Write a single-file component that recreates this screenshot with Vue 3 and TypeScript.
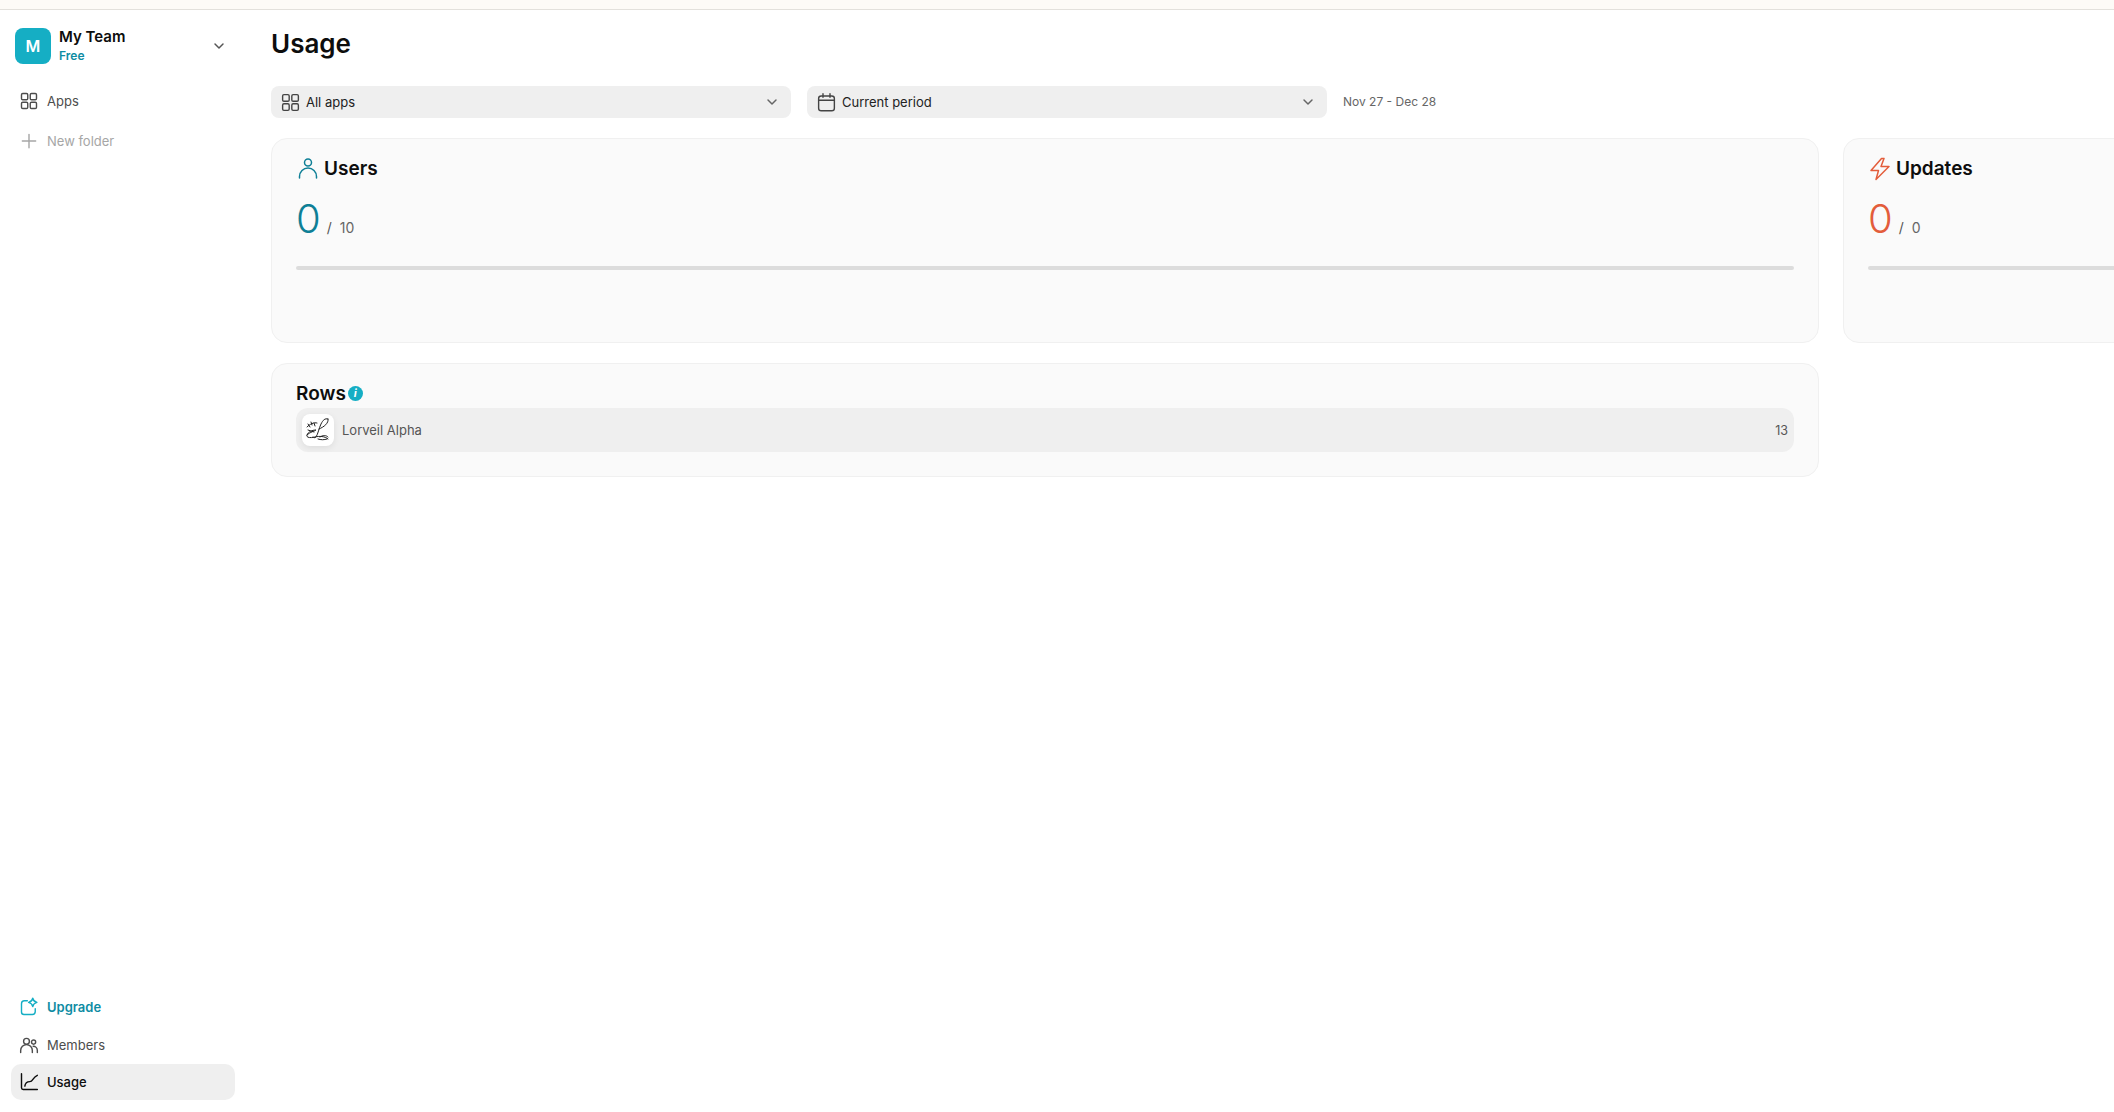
<script setup lang="ts">
interface NavItem {
  label: string
  icon: string
  tone?: string
}

const topNav: NavItem[] = [
  { label: 'Apps', icon: 'grid' },
  { label: 'New folder', icon: 'plus', tone: 'muted' }
]

const bottomNav: NavItem[] = [
  { label: 'Upgrade', icon: 'upgrade', tone: 'accent' },
  { label: 'Members', icon: 'members' },
  { label: 'Usage', icon: 'chart', tone: 'active' }
]

const metrics = [
  { label: 'Users', value: 0, limit: 10, tone: 'teal', icon: 'user' },
  { label: 'Updates', value: 0, limit: 0, tone: 'red', icon: 'bolt' }
]
</script>

<template>
  <div class="shell">
    <div class="banner"></div>
    <div class="layout">
      <!-- Sidebar -->
      <aside class="sidebar">
        <div>
          <div class="team">
            <div class="avatar">M</div>
            <div class="team-text">
              <div class="team-name">My Team</div>
              <div class="team-plan">Free</div>
            </div>
            <svg class="team-chevron" viewBox="0 0 24 24" fill="none" stroke="currentColor" stroke-width="2.2" stroke-linecap="round" stroke-linejoin="round">
              <path d="M6 9l6 6 6-6" />
            </svg>
          </div>
          <nav class="nav">
            <div v-for="item in topNav" :key="item.label" class="nav-item" :class="item.tone">
              <svg class="nav-icon" viewBox="0 0 24 24" fill="none" stroke="currentColor" stroke-width="1.7" stroke-linecap="round" stroke-linejoin="round">
                <template v-if="item.icon === 'grid'">
                  <rect x="3" y="3" width="7.5" height="7.5" rx="1.5" />
                  <rect x="13.5" y="3" width="7.5" height="7.5" rx="1.5" />
                  <rect x="3" y="13.5" width="7.5" height="7.5" rx="1.5" />
                  <rect x="13.5" y="13.5" width="7.5" height="7.5" rx="1.5" />
                </template>
                <path v-else d="M12 4v16M4 12h16" />
              </svg>
              <span>{{ item.label }}</span>
            </div>
          </nav>
        </div>
        <nav class="nav nav-bottom">
          <div v-for="item in bottomNav" :key="item.label" class="nav-item" :class="item.tone">
            <svg class="nav-icon" viewBox="0 0 24 24" fill="none" stroke="currentColor" stroke-width="1.7" stroke-linecap="round" stroke-linejoin="round">
              <template v-if="item.icon === 'upgrade'">
                <path d="M10 4.500H6.500A3.500 3.500 0 0 0 3 8v10a3 3 0 0 0 3 3h10a3.500 3.500 0 0 0 3.500-3.500V14" />
                <path d="M16.500 1.500c.6 3 1.700 4.200 5 5-3.300.8-4.400 2-5 5-.6-3-1.700-4.200-5-5 3.300-.8 4.400-2 5-5z" />
              </template>
              <template v-else-if="item.icon === 'members'">
                <circle cx="9" cy="7.500" r="3.500" />
                <circle cx="17.500" cy="8.500" r="2.500" />
                <path d="M2 21v-2.500a7 7 0 0 1 14 0V21" />
                <path d="M17 13.500a5 5 0 0 1 5 5V21" />
              </template>
              <template v-else>
                <path d="M3 2v17a2 2 0 0 0 2 2h17" />
                <path d="M7 17c.5-4 2.500-5.500 6-5.500 4 0 3-5 9-7.500" />
              </template>
            </svg>
            <span>{{ item.label }}</span>
          </div>
        </nav>
      </aside>

      <!-- Main content -->
      <main class="main">
        <h1 class="page-title">Usage</h1>

        <div class="filters">
          <div class="select">
            <svg class="select-icon" viewBox="0 0 24 24" fill="none" stroke="currentColor" stroke-width="1.600" stroke-linejoin="round">
              <rect x="3" y="3" width="7.500" height="7.500" rx="1.500" />
              <rect x="13.500" y="3" width="7.500" height="7.500" rx="1.500" />
              <rect x="3" y="13.500" width="7.500" height="7.500" rx="1.500" />
              <rect x="13.500" y="13.500" width="7.500" height="7.500" rx="1.500" />
            </svg>
            <span class="select-label">All apps</span>
            <svg class="select-chevron" viewBox="0 0 24 24" fill="none" stroke="currentColor" stroke-width="2.200" stroke-linecap="round" stroke-linejoin="round">
              <path d="M6 9l6 6 6-6" />
            </svg>
          </div>
          <div class="select">
            <svg class="select-icon" viewBox="0 0 24 24" fill="none" stroke="currentColor" stroke-width="1.600" stroke-linecap="round" stroke-linejoin="round">
              <rect x="3" y="4.500" width="18" height="17" rx="3" />
              <path d="M3 9.500h18M8 2v4M16 2v4" />
            </svg>
            <span class="select-label">Current period</span>
            <svg class="select-chevron" viewBox="0 0 24 24" fill="none" stroke="currentColor" stroke-width="2.200" stroke-linecap="round" stroke-linejoin="round">
              <path d="M6 9l6 6 6-6" />
            </svg>
          </div>
          <span class="date-range">Nov 27 - Dec 28</span>
        </div>

        <div class="metric-grid">
          <section v-for="metric in metrics" :key="metric.label" class="card metric-card">
            <div class="metric-head">
              <svg class="metric-icon" :class="metric.tone" viewBox="0 0 24 24" fill="none" stroke="currentColor" stroke-width="1.500" stroke-linecap="round" stroke-linejoin="round">
                <template v-if="metric.icon === 'user'">
                  <circle cx="12" cy="5.500" r="3.500" />
                  <path d="M3.500 21v-1.500a8.500 8.500 0 0 1 17 0V21" />
                </template>
                <path v-else d="M13.500 1.500L3 13.500h7.500L8 22.500l13-13h-8l3-8z" />
              </svg>
              <h2 class="card-title">{{ metric.label }}</h2>
            </div>
            <div class="metric-value">
              <span class="metric-number" :class="metric.tone">{{ metric.value }}</span>
              <span class="metric-slash">/</span>
              <span class="metric-limit">{{ metric.limit }}</span>
            </div>
            <div class="progress"></div>
          </section>

          <section class="card rows-card">
            <div class="rows-head">
              <h2 class="card-title">Rows</h2>
              <span class="info">i</span>
            </div>
            <div class="rows-item">
              <div class="app-icon">
                <svg viewBox="0 0 32 32" fill="none" stroke="#222" stroke-width="1" stroke-linecap="round" stroke-linejoin="round">
                  <path d="M26 5c-3-1-5 1-7 5s-3 10-5 13c-1 1-3 1-3 0" />
                  <path d="M26 5c1 4-4 8-9 10" />
                  <path d="M5 13c3-3 7-5 10-4M6 10l2 3M9 8l1 3M12 9l1 3" />
                  <path d="M5 21c3-3 8-4 9-5-4 0-8 2-9 5-1 3 4 3 8 2s10-1 13 2" />
                  <path d="M18 23c3-2 6-2 8 0M6 16l6 2M16 25c3 1 6 1 9 0" />
                </svg>
              </div>
              <span class="rows-name">Lorveil Alpha</span>
              <span class="rows-count">13</span>
            </div>
          </section>
        </div>
      </main>
    </div>
  </div>
</template>

<style>
html,
body {
  margin: 0;
  background: #ffffff;
  overflow: hidden;
}
</style>

<style scoped>
.shell {
  height: 1112px;
  width: 2114px;
  overflow: hidden;
  display: flex;
  flex-direction: column;
  font-family: Inter, 'Noto Sans', sans-serif;
  color: #0d0d0d;
}

.banner {
  height: 9px;
  flex-shrink: 0;
  background: #fdfbf7;
  border-bottom: 1px solid #e3e1dc;
}

.layout {
  flex: 1;
  display: flex;
  min-height: 0;
}

/* Sidebar */
.sidebar {
  width: 235px;
  box-sizing: border-box;
  flex-shrink: 0;
  padding: 18px 0 12px 11px;
  display: flex;
  flex-direction: column;
  justify-content: space-between;
}

.team {
  display: flex;
  align-items: center;
  padding-left: 4px;
  height: 36px;
}

.avatar {
  width: 36px;
  height: 36px;
  border-radius: 8px;
  background: #15aec4;
  color: #ffffff;
  font-size: 16px;
  font-weight: 600;
  display: flex;
  align-items: center;
  justify-content: center;
}

.team-text {
  margin-left: 8px;
  flex: 1;
}

.team-name {
  font-size: 15px;
  font-weight: 600;
  line-height: 20px;
  margin-top: -1px;
}

.team-plan {
  font-size: 12px;
  font-weight: 600;
  line-height: 16px;
  margin-top: 1px;
  color: #0e8ca3;
}

.team-chevron {
  width: 16px;
  height: 16px;
  color: #555555;
  margin-right: 8px;
}

.nav {
  display: flex;
  flex-direction: column;
  margin-top: 18px;
  gap: 2px;
}

.nav-bottom {
  margin-top: 0;
  gap: 0;
}

.nav-item {
  height: 38px;
  display: flex;
  align-items: center;
  gap: 8px;
  padding-left: 8px;
  border-radius: 10px;
  font-size: 13px;
  color: #4d4d4d;
}

.nav-icon {
  width: 20px;
  height: 20px;
  flex-shrink: 0;
}

.nav-item.muted {
  color: #a6a6a6;
}

.nav-item.accent {
  color: #0e8ca3;
  font-weight: 600;
}

.nav-item.accent .nav-icon {
  color: #15aec4;
}

.nav-item.active {
  height: 36px;
  background: #efefef;
  color: #0d0d0d;
  font-weight: 500;
}

/* Main */
.main {
  flex: 1;
  min-width: 0;
  padding-left: 36px;
  overflow: hidden;
}

.page-title {
  margin: 0;
  padding-top: 14px;
  font-size: 26px;
  font-weight: 600;
  line-height: 40px;
}

.filters {
  display: flex;
  align-items: center;
  gap: 16px;
  margin-top: 22px;
}

.select {
  width: 520px;
  height: 32px;
  box-sizing: border-box;
  padding: 0 11px 0 9px;
  border-radius: 8px;
  background: #efefef;
  display: flex;
  align-items: center;
  gap: 5px;
}

.select-icon {
  width: 21px;
  height: 21px;
  color: #444444;
  flex-shrink: 0;
}

.select-label {
  flex: 1;
  font-size: 13px;
  color: #222222;
}

.select-chevron {
  width: 16px;
  height: 16px;
  color: #666666;
}

.date-range {
  font-size: 12px;
  line-height: 16px;
  margin-top: -1px;
  color: #666666;
}

.metric-grid {
  display: grid;
  grid-template-columns: 1548px 1548px;
  gap: 20px 24px;
  margin-top: 20px;
}

.card {
  box-sizing: border-box;
  background: #fafafa;
  border: 1px solid #f0f0f0;
  border-radius: 16px;
  padding: 0 24px;
}

.metric-card {
  height: 205px;
  padding-top: 16px;
}

.metric-head {
  display: flex;
  align-items: center;
  gap: 4px;
  height: 28px;
}

.metric-icon {
  width: 24px;
  height: 24px;
  flex-shrink: 0;
}

.card-title {
  margin: 0;
  font-size: 19px;
  font-weight: 600;
  line-height: 28px;
}

.metric-value {
  display: flex;
  align-items: baseline;
  margin-top: 11px;
  height: 50px;
}

.metric-number {
  font-size: 40px;
  font-weight: 350;
  line-height: 50px;
}

.teal {
  color: #0e7f96;
}

.red {
  color: #e35d3b;
}

.metric-slash {
  margin-left: 6px;
  font-size: 14px;
  color: #555555;
}

.metric-limit {
  margin-left: 8px;
  font-size: 14px;
  color: #666666;
}

.progress {
  height: 4px;
  margin-top: 22px;
  border-radius: 2px;
  background: #dcdcdc;
}

.rows-card {
  height: 114px;
  padding-top: 15px;
}

.rows-head {
  display: flex;
  align-items: center;
  gap: 2px;
  height: 28px;
}

.rows-head .card-title {
  margin-top: 2px;
}

.info {
  width: 15px;
  height: 15px;
  border-radius: 50%;
  background: #15aec4;
  color: #ffffff;
  font-size: 11px;
  font-style: italic;
  font-weight: 700;
  line-height: 15px;
  text-align: center;
}

.rows-item {
  height: 44px;
  margin-top: 1px;
  padding: 0 6px;
  border-radius: 12px;
  background: #efefef;
  display: flex;
  align-items: center;
  gap: 8px;
}

.app-icon {
  width: 32px;
  height: 32px;
  border-radius: 8px;
  background: #ffffff;
  box-shadow: 0 2px 6px rgba(0, 0, 0, 0.08);
  flex-shrink: 0;
}

.app-icon svg {
  width: 100%;
  height: 100%;
  display: block;
}

.rows-name {
  flex: 1;
  font-size: 13px;
  color: #555555;
}

.rows-count {
  font-size: 12.500px;
  color: #555555;
}
</style>
